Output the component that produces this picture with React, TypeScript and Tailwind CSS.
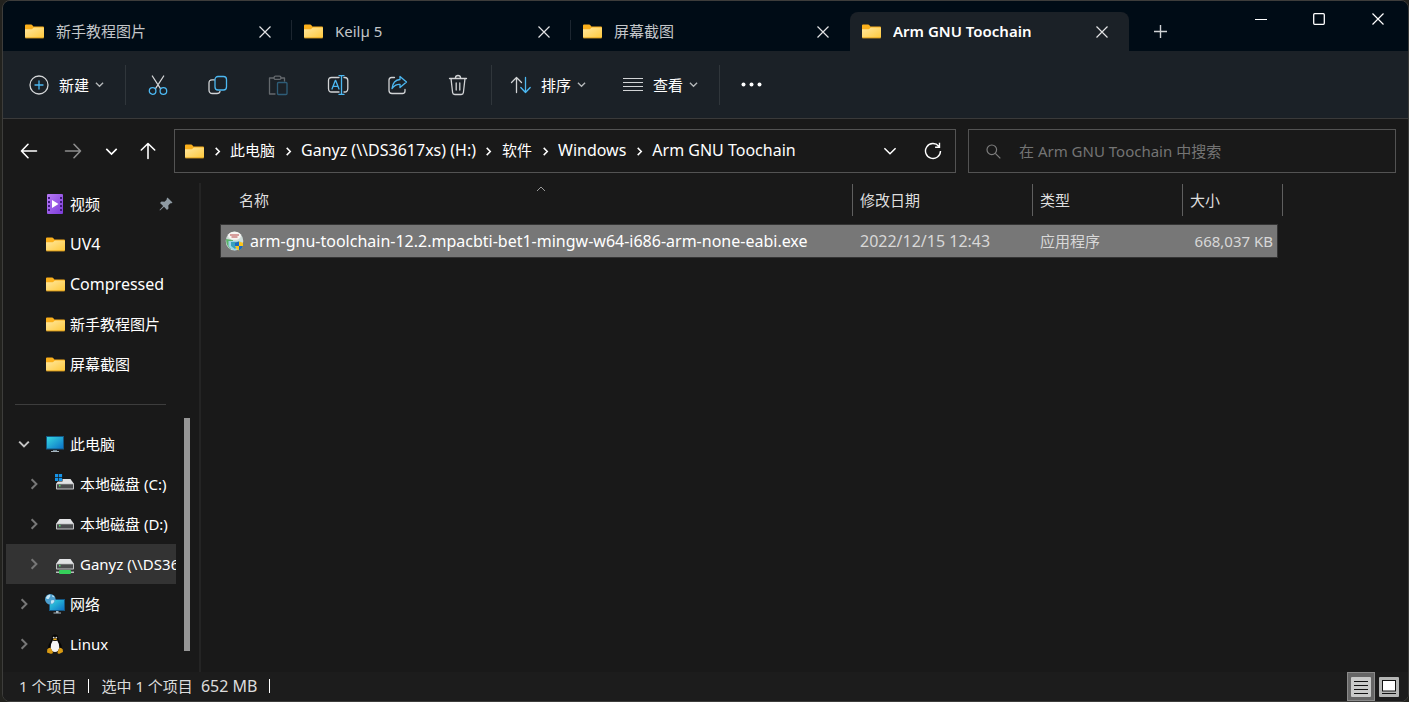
import type { ReactNode } from "react";

const FONT =
  'font-["Noto_Sans","Noto_Sans_CJK_SC",sans-serif]';

function FolderIcon() {
  return (
    <svg width="19" height="15" viewBox="0 0 19 15" className="shrink-0" aria-hidden="true">
      <defs>
        <linearGradient id="folderFace" x1="0" y1="0" x2="1" y2="1">
          <stop offset="0" stopColor="#ffe8a0" />
          <stop offset="1" stopColor="#ffc93c" />
        </linearGradient>
      </defs>
      <path d="M0 1.5Q0 .5 1 .5h5.2q.6 0 1 .5l1.2 1.5H18q1 0 1 1V8H0z" fill="#fbb01c" />
      <path d="M0 5.2h6.6q.5 0 .9-.4l1-1.1q.3-.3.8-.3H18q1 0 1 1V13q0 1-1 1H1q-1 0-1-1z" fill="url(#folderFace)" />
      <path d="M.4 13.9h18.2" stroke="#e2a21d" strokeWidth="1" />
    </svg>
  );
}

function Chevron({ dir, size = 8, width = 1, className = "" }: { dir: "down" | "right" | "up"; size?: number; width?: number; className?: string }) {
  const d = { down: "M1 3l4 4 4-4", up: "M1 7l4-4 4 4", right: "M3 1l4 4-4 4" }[dir];
  return (
    <svg width={size} height={size} viewBox="0 0 10 10" fill="none" stroke="currentColor" strokeWidth={(width * 10) / size} className={`shrink-0 ${className}`} aria-hidden="true">
      <path d={d} />
    </svg>
  );
}

function CloseIcon({ size = 12 }: { size?: number }) {
  return (
    <svg width={size} height={size} viewBox="0 0 12 12" stroke="currentColor" strokeWidth="1.2" aria-hidden="true">
      <path d="M.5.5l11 11M11.5.5l-11 11" />
    </svg>
  );
}

function Glyph({ children, className = "" }: { children: ReactNode; className?: string }) {
  return (
    <svg width="22" height="22" viewBox="0 0 22 22" fill="none" stroke="#d2d4d6" strokeWidth="1.3" strokeLinecap="round" strokeLinejoin="round" className={`shrink-0 ${className}`} aria-hidden="true">
      {children}
    </svg>
  );
}

const BLUE = "#4cb8f2";

const NewIcon = () => (
  <Glyph>
    <circle cx="11" cy="11" r="9" />
    <path d="M11 7v8M7 11h8" stroke={BLUE} />
  </Glyph>
);
const CutIcon = () => (
  <Glyph>
    <path d="M5.3 2l8.2 12.6M16.7 2L8.5 14.6" />
    <circle cx="5.6" cy="17" r="3.3" stroke={BLUE} />
    <circle cx="16.4" cy="17" r="3.3" stroke={BLUE} />
  </Glyph>
);
const CopyIcon = () => (
  <Glyph>
    <path d="M7.4 5.900H5Q2 5.900 2 8.900V16q0 3.500 3.500 3.500H10q2.500 0 3-2.200" />
    <rect x="8" y="2.500" width="11.500" height="13.500" rx="3" stroke={BLUE} />
  </Glyph>
);
const PasteIcon = () => (
  <Glyph className="opacity-40">
    <path d="M7 4H2.500v16H8M14 4h3.500v3" />
    <rect x="7" y="2.200" width="7" height="3.200" rx="1.500" />
    <rect x="10.500" y="8.500" width="9.500" height="12" rx="1" stroke={BLUE} />
  </Glyph>
);
const RenameIcon = () => (
  <Glyph>
    <path d="M12 3.500H4.500Q1.500 3.500 1.500 6.500v8q0 3.500 3 3.500H12M17 3.500h.8q3 0 3 3v8q0 3.500-3 3.500H17" />
    <path d="M5 15l3.300-8.500h.4L12 15M6.200 12.400h4.600" stroke={BLUE} />
    <path d="M14.500 2v18M12 1.600h5M12 20.400h5" stroke={BLUE} />
  </Glyph>
);
const ShareIcon = () => (
  <Glyph>
    <path d="M7.500 3.500H4.500Q2 3.500 2 6v10.500Q2 19.500 5 19.500h10.500q2.500 0 2.500-2.500v-1.500" />
    <path d="M13 2.500l6.500 5.500-6.500 5.500V10.500Q8.500 10 5 14.500 6 6 13 5.500z" stroke={BLUE} />
  </Glyph>
);
const TrashIcon = () => (
  <Glyph>
    <path d="M2.500 4.500h17M8.300 4.200q.3-2.700 2.700-2.700t2.700 2.700M4 4.500l1.600 14q.2 2 2.200 2h6.400q2 0 2.200-2l1.600-14M9.200 9v7M12.800 9v7" />
  </Glyph>
);
const SortIcon = () => (
  <Glyph>
    <path d="M6.500 18.500V3.500M1.500 8.500l5-5 5 5" />
    <path d="M15.500 3.500v15M10.800 13.500l4.700 5 4.700-5" stroke={BLUE} />
  </Glyph>
);
const ViewIcon = () => (
  <Glyph>
    <path d="M1 4.500h20M1 8.500h20M1 12.500h20M1 16.500h20" strokeLinecap="butt" strokeWidth="1" />
  </Glyph>
);

function Arrow({ rotate = "" }: { rotate?: string }) {
  return (
    <svg width="18" height="18" viewBox="0 0 18 18" fill="none" stroke="currentColor" strokeWidth="1.600" strokeLinecap="round" strokeLinejoin="round" className={rotate} aria-hidden="true">
      <path d="M16.500 9h-15M8 2.300L1.500 9 8 15.700" />
    </svg>
  );
}

function VideoIcon() {
  return (
    <svg width="18" height="20" viewBox="0 0 18 20" aria-hidden="true">
      <defs>
        <linearGradient id="film" x1="0" y1="0" x2="1" y2="1">
          <stop offset="0" stopColor="#b77af5" />
          <stop offset="1" stopColor="#7c3bd9" />
        </linearGradient>
      </defs>
      <rect x="1" width="16" height="20" rx="1" fill="url(#film)" />
      <path d="M3 3v15M15 3v15" stroke="#40197d" strokeWidth="2" strokeDasharray="2 2" />
      <path d="M6 6l6.500 4L6 14z" fill="#fff" />
    </svg>
  );
}

function MonitorIcon() {
  return (
    <svg width="18" height="16" viewBox="0 0 18 16" aria-hidden="true">
      <defs>
        <linearGradient id="screen" x1="0" y1="0" x2="1" y2="1">
          <stop offset="0" stopColor="#38dbe0" />
          <stop offset="1" stopColor="#0a6fc6" />
        </linearGradient>
      </defs>
      <rect x=".5" y=".5" width="17" height="12.500" fill="url(#screen)" stroke="#145783" />
      <path d="M7 14h4v1H7z" fill="#6f8695" />
      <path d="M5 15h8v1H5z" fill="#a9b7c0" />
    </svg>
  );
}

function DriveIcon({ kind = "plain" }: { kind?: "plain" | "system" | "network" }) {
  return (
    <svg width="20" height="20" viewBox="0 0 20 20" aria-hidden="true">
      <path d="M4.500 5h11L19 10H1z" fill="#e2e3e5" />
      <rect x="1" y="9.500" width="18" height="6" rx=".8" fill="#c4c5c7" />
      <rect x="2" y="10.300" width="16" height="4.200" fill="#4b4c4e" />
      <rect x="4" y="11" width="1.500" height="1.500" fill="#4ee06a" />
      {kind === "system" && (
        <g fill="#1593e8">
          <rect x="0" y="0" width="7.500" height="7.500" fill="#191919" />
          <path d="M0 0h3.200v3.200H0zM3.900 0h3.200v3.200H3.900zM0 3.900h3.200v3.200H0zM3.900 3.900h3.200v3.200H3.900z" />
        </g>
      )}
      {kind === "network" && (
        <g>
          <path d="M1 17.500h18v1.500H1z" fill="#b9bcbe" />
          <rect x="4" y="16" width="12" height="4" rx="1" fill="#35d05a" />
        </g>
      )}
    </svg>
  );
}

function NetworkIcon() {
  return (
    <svg width="20" height="20" viewBox="0 0 20 20" aria-hidden="true">
      <rect x="4.500" y="5.500" width="15" height="11" fill="url(#screen)" stroke="#145783" />
      <path d="M11 17h2.500v1.500H16v1H8.500v-1H11z" fill="#a9b7c0" />
      <circle cx="5.300" cy="5.300" r="5.300" fill="#4c9fce" />
      <path d="M1 3.500Q2.500.8 5 .6 6.200 2 4.500 3.500 4 5.500 2.500 5 1.200 5 1 3.500zM6 6.500q3-1 3.500.5-1 2.500-2.800 3Q5.500 8.500 6 6.500zM7 1q2 .7 2.600 2.300L7.500 3z" fill="#c6e6f5" />
    </svg>
  );
}

function TuxIcon() {
  return (
    <svg width="18" height="20" viewBox="0 0 18 20" aria-hidden="true">
      <path d="M9 .5q3 0 3.200 3.300Q12.300 6 13.800 8q2 2.800 2 5.500T13 18H5q-2.800-1.800-2.800-4.500T4.200 8q1.500-2 1.600-4.200Q6 .5 9 .5z" fill="#060606" />
      <path d="M6.800 6.500q2.200 1.200 4.400 0Q13.500 10 13.300 13.500 12.500 18 9 18T4.700 13.500Q4.500 10 6.800 6.500z" fill="#f4f4f4" />
      <circle cx="7.700" cy="3.600" r=".9" fill="#ddd" />
      <circle cx="10.300" cy="3.600" r=".9" fill="#ddd" />
      <path d="M6.800 5.200L9 4.200l2.200 1Q9 7.200 6.800 5.200z" fill="#e8a91c" />
      <path d="M1.300 15.200q2.200-1.700 3.400-1.300l2.300 4Q6.800 20 4.500 19.700L1 18.600zM16.700 15.200q-2.200-1.700-3.400-1.300l-1.800 4q-.2 2.100 2 1.800l3.500-1.600z" fill="#d99a12" />
    </svg>
  );
}

function InstallerIcon() {
  return (
    <svg width="20" height="20" viewBox="0 0 20 20" className="shrink-0" aria-hidden="true">
      <ellipse cx="9.500" cy="10" rx="8.800" ry="9.500" fill="#cfdcd8" />
      <path d="M1 8q0 7 5 10.500L8 9z" fill="#59b36a" />
      <path d="M3.500 10h12v5q-2 4-6 4.300Q5 18.500 3.500 15z" fill="#9cd4e4" />
      <ellipse cx="9.500" cy="4.800" rx="6.500" ry="4" fill="#f7f4f2" />
      <path d="M5 4h9M6.500 6h6" stroke="#b84848" strokeWidth="1.200" />
      <path d="M6 11h7v4l-3 3-4-3z" fill="#38a1bd" />
      <path d="M14 10.500l4 1.300V15q-.8 3-4 4.500-3.200-1.500-4-4.500v-3.200z" fill="#fac41c" />
      <path d="M14 10.500l-4 1.300V15h4zM14 15h4q-.8 3-4 4.500z" fill="#1769c4" />
    </svg>
  );
}

const tabs = [
  { title: "新手教程图片", active: false, line: true },
  { title: "Keilµ 5", active: false, line: true },
  { title: "屏幕截图", active: false, line: false },
  { title: "Arm GNU Toochain", active: true, line: false },
];

function TabStrip() {
  return (
    <header className="flex h-[50px] shrink-0 items-start bg-[#000c16] pl-2.5">
      <div role="tablist" className="flex min-w-0 self-end">
        {tabs.map((t) => (
          <div
            key={t.title}
            className={`relative flex h-[39px] w-[279px] min-w-0 items-center pr-[21px] pl-3 ${t.active ? "rounded-t-lg bg-[#1b2127] font-semibold text-white" : "text-[#c3c6c9]"}`}
          >
            <button role="tab" aria-selected={t.active} className="flex min-w-0 flex-1 items-center gap-3 text-left">
              <FolderIcon />
              <span className="truncate pb-0.5 text-[15px] leading-5">{t.title}</span>
            </button>
            <button aria-label="关闭标签页" className="text-[#e3e4e5]">
              <CloseIcon />
            </button>
            {t.line && <span className="absolute top-2 right-0 h-5 w-px bg-[#1c2630]" />}
          </div>
        ))}
      </div>
      <button aria-label="新建标签页" className="grid h-[39px] w-[62px] shrink-0 place-items-center self-end text-[#d0d3d5]">
        <svg width="13" height="13" viewBox="0 0 13 13" stroke="currentColor" strokeWidth="1.400" aria-hidden="true">
          <path d="M6.500 0v13M0 6.500h13" />
        </svg>
      </button>
      <div className="ml-auto flex shrink-0 text-white">
        <button aria-label="最小化" className="grid h-9 w-[58px] place-items-center">
          <svg width="12" height="12" viewBox="0 0 12 12" stroke="currentColor" aria-hidden="true"><path d="M0 6.500h12" /></svg>
        </button>
        <button aria-label="最大化" className="grid h-9 w-[58px] place-items-center">
          <svg width="12" height="12" viewBox="0 0 12 12" stroke="currentColor" fill="none" strokeWidth="1.300" aria-hidden="true"><rect x=".7" y=".7" width="10.600" height="10.600" rx="1" /></svg>
        </button>
        <button aria-label="关闭" className="grid h-9 w-[60px] place-items-center"><CloseIcon size={12} /></button>
      </div>
    </header>
  );
}

function ToolButton({ label, children }: { label: string; children: ReactNode }) {
  return (
    <button aria-label={label} className="grid h-10 w-[60px] shrink-0 place-items-center">
      {children}
    </button>
  );
}

function MenuButton({ label, icon }: { label: string; icon: ReactNode }) {
  return (
    <button className="flex h-10 shrink-0 items-center text-white">
      {icon}
      <span className="ml-[9px] text-[15px] leading-5 whitespace-nowrap">{label}</span>
      <Chevron dir="down" size={9} width={1.3} className="ml-1.5 text-[#b4b7b9]" />
    </button>
  );
}

const Rule = ({ className = "" }: { className?: string }) => <span className={`h-10 w-px shrink-0 bg-[#30363b] ${className}`} />;

function Toolbar() {
  return (
    <div role="toolbar" className="flex h-[68px] shrink-0 items-center border-b border-[#3a3a3a] bg-[#1b2127] pl-[25px]">
      <MenuButton label="新建" icon={<NewIcon />} />
      <Rule className="mr-0.5 ml-[21px]" />
      <ToolButton label="剪切"><CutIcon /></ToolButton>
      <ToolButton label="复制"><CopyIcon /></ToolButton>
      <ToolButton label="粘贴"><PasteIcon /></ToolButton>
      <ToolButton label="重命名"><RenameIcon /></ToolButton>
      <ToolButton label="共享"><ShareIcon /></ToolButton>
      <ToolButton label="删除"><TrashIcon /></ToolButton>
      <Rule className="mr-[18px] ml-[3px]" />
      <MenuButton label="排序" icon={<SortIcon />} />
      <span className="w-9 shrink-0" />
      <MenuButton label="查看" icon={<ViewIcon />} />
      <Rule className="ml-[21px]" />
      <button aria-label="更多" className="grid h-10 w-[62px] place-items-center">
        <svg width="21" height="5" viewBox="0 0 21 5" fill="#fff" aria-hidden="true">
          <circle cx="2.500" cy="2.500" r="2" /><circle cx="10.500" cy="2.500" r="2" /><circle cx="18.500" cy="2.500" r="2" />
        </svg>
      </button>
    </div>
  );
}

const crumbs = [
  { name: "此电脑", size: "text-[15px]" },
  { name: "Ganyz (\\\\DS3617xs) (H:)", size: "text-base" },
  { name: "软件", size: "text-[15px]" },
  { name: "Windows", size: "text-base" },
  { name: "Arm GNU Toochain", size: "text-base" },
];

function AddressRow() {
  return (
    <div className="flex h-16 shrink-0 items-center pr-3 pl-1 text-white">
      <button aria-label="后退" className="grid h-10 w-11 place-items-center"><Arrow /></button>
      <button aria-label="前进" className="grid h-10 w-11 place-items-center text-[#8d8d8d]"><Arrow rotate="rotate-180" /></button>
      <button aria-label="最近的位置" className="grid h-10 w-8 place-items-center"><Chevron dir="down" size={13} width={1.6} /></button>
      <button aria-label="向上" className="grid h-10 w-[42px] place-items-center"><Arrow rotate="rotate-90" /></button>
      <nav aria-label="地址" className="ml-[5px] flex h-11 min-w-0 flex-1 items-center border border-[#535353] pr-3 pl-2.5">
        <FolderIcon />
        {crumbs.map((c) => (
          <span key={c.name} className="flex items-center whitespace-nowrap">
            <span className="grid w-[26px] place-items-center"><Chevron dir="right" size={9} width={1.5} /></span>
            <a href="#" className={`pb-0.5 leading-5 ${c.size}`}>{c.name}</a>
          </span>
        ))}
        <button aria-label="以前的位置" className="ml-auto grid h-10 w-10 place-items-center"><Chevron dir="down" size={14} width={1.5} /></button>
        <button aria-label="刷新" className="ml-[13px] grid h-10 w-5 place-items-center">
          <svg width="18" height="18" viewBox="0 0 18 18" fill="none" stroke="currentColor" strokeWidth="1.400" aria-hidden="true">
            <path d="M14.800 4.200A7.500 7.500 0 1 0 16.500 9M15.500.8v4.400h-4.400" />
          </svg>
        </button>
      </nav>
      <label className="ml-3 flex h-11 w-[428px] shrink-0 items-center border border-[#535353] pl-[17px]">
        <svg width="15" height="15" viewBox="0 0 15 15" fill="none" stroke="#7d7d7d" strokeWidth="1.200" aria-hidden="true">
          <circle cx="5.800" cy="5.800" r="4.800" /><path d="M9.300 9.300l5 5" />
        </svg>
        <input aria-label="搜索" placeholder="在 Arm GNU Toochain 中搜索" className="ml-[18px] min-w-0 flex-1 bg-transparent text-[15px] leading-5 outline-none placeholder:text-[#747474]" />
      </label>
    </div>
  );
}

type Node = { name: string; icon: ReactNode; arrow?: "right" | "down"; deep?: boolean; selected?: boolean; pinned?: boolean; latin?: boolean };

const quick: Node[] = [
  { name: "视频", icon: <VideoIcon />, pinned: true },
  { name: "UV4", icon: <FolderIcon />, latin: true },
  { name: "Compressed", icon: <FolderIcon />, latin: true },
  { name: "新手教程图片", icon: <FolderIcon /> },
  { name: "屏幕截图", icon: <FolderIcon /> },
];

const tree: Node[] = [
  { name: "此电脑", icon: <MonitorIcon />, arrow: "down" },
  { name: "本地磁盘 (C:)", icon: <DriveIcon kind="system" />, arrow: "right", deep: true },
  { name: "本地磁盘 (D:)", icon: <DriveIcon />, arrow: "right", deep: true },
  { name: "Ganyz (\\\\DS3617xs) (H:)", icon: <DriveIcon kind="network" />, arrow: "right", deep: true, selected: true },
  { name: "网络", icon: <NetworkIcon />, arrow: "right" },
  { name: "Linux", icon: <TuxIcon />, arrow: "right" },
];

function TreeRow({ node }: { node: Node }) {
  return (
    <li>
      <button className={`flex h-10 w-full items-center overflow-hidden text-left ${node.deep ? "pl-[17px]" : "pl-[7px]"} ${node.selected ? "bg-[#333333]" : ""}`}>
        <span className="grid w-[22px] shrink-0 place-items-center">
          {node.arrow && <Chevron dir={node.arrow} size={12} width={2} className={node.arrow === "down" ? "text-[#c4c4c4]" : "text-[#777777]"} />}
        </span>
        <span className="ml-2.5 grid w-5 shrink-0 place-items-center">{node.icon}</span>
        <span className={`ml-[5px] leading-5 whitespace-nowrap text-white ${node.latin ? "text-base" : "text-[15px]"}`}>{node.name}</span>
        {node.pinned && (
          <svg width="14" height="14" viewBox="0 0 14 14" className="mr-[3px] ml-auto shrink-0" fill="#8e9aa3" aria-hidden="true">
            <path d="M8.500.5l5 5-1.500 1-.7-.2-2 2.200.2 3L8 13 5 9.800 1 13.500l-.5-.5L4.200 9 1 6l1.500-1.500 3 .2 2.200-2L7.500 2z" />
          </svg>
        )}
      </button>
    </li>
  );
}

function Sidebar() {
  return (
    <aside className="flex w-[198px] shrink-0 border-r-2 border-[#242424] pt-px pl-[3px]">
      <div className="w-[170px] shrink-0 overflow-hidden">
        <ul>{quick.map((n) => <TreeRow key={n.name} node={n} />)}</ul>
        <div className="flex h-10 items-center pr-2.5 pl-[9px]">
          <hr className="h-px flex-1 border-0 bg-[#3d3d3d]" />
        </div>
        <ul>{tree.map((n) => <TreeRow key={n.name} node={n} />)}</ul>
      </div>
      <div className="ml-2 flex w-1.5 flex-col justify-end pb-[21px]">
        <span className="h-1/2 bg-[#969696]" />
      </div>
    </aside>
  );
}

function FileTable() {
  const head = "h-8 border-r border-[#5f5f5f] pl-[7px] text-left text-[15px] leading-5 font-normal text-[#dedede]";
  const cell = "flex h-[34px] items-center border-y border-[#343434] bg-[#777777] leading-5 whitespace-nowrap";
  return (
    <main className="min-w-0 flex-1 overflow-hidden pt-px pl-[19px]">
      <table className="w-[1063px] table-fixed border-separate border-spacing-0">
        <colgroup>
          <col className="w-[633px]" />
          <col className="w-[180px]" />
          <col className="w-[150px]" />
          <col className="w-[100px]" />
        </colgroup>
        <thead>
          <tr>
            <th className={`${head} relative`}>
              <span className="pl-3">名称</span>
              <Chevron dir="up" size={10} className="absolute top-0 left-1/2 text-[#9a9a9a]" />
            </th>
            <th className={head}>修改日期</th>
            <th className={head}>类型</th>
            <th className={head}>大小</th>
          </tr>
        </thead>
        <tbody>
          <tr>
            <td className="p-0 pt-2">
              <div className={`${cell} gap-[5px] border-l pl-1 text-base text-white`}>
                <InstallerIcon />
                arm-gnu-toolchain-12.2.mpacbti-bet1-mingw-w64-i686-arm-none-eabi.exe
              </div>
            </td>
            <td className="p-0 pt-2"><div className={`${cell} pl-[7px] text-base text-[#d8d8d8]`}>2022/12/15 12:43</div></td>
            <td className="p-0 pt-2"><div className={`${cell} pl-[7px] text-[15px] text-[#d8d8d8]`}>应用程序</div></td>
            <td className="p-0 pt-2"><div className={`${cell} mr-[5px] justify-end border-r pr-1 text-[15px] text-[#d8d8d8]`}>668,037 KB</div></td>
          </tr>
        </tbody>
      </table>
    </main>
  );
}

function StatusBar() {
  return (
    <footer className="flex h-[29px] shrink-0 items-center bg-[#1c1c1c] pr-[9px] pl-4 text-[15px] text-[#dcdcdc]">
      <div className="flex items-center pb-0.5 leading-5">
        <span>1 个项目</span>
        <span className="mx-3 h-3.5 w-px bg-white" />
        <span>选中 1 个项目</span>
        <span className="ml-2 text-base leading-5">652 MB</span>
        <span className="ml-3 h-3.5 w-px bg-white" />
      </div>
      <div className="ml-auto flex items-center gap-1">
        <button aria-label="详细信息" className="grid h-[29px] w-7 place-items-center border border-[#8a8a8a] bg-[#666666]">
          <svg width="20" height="20" viewBox="0 0 20 20" aria-hidden="true">
            <rect width="20" height="20" rx="1" fill="#c9cac9" />
            <path d="M3 4.500h14M3 8.500h14M3 12.500h14M3 16.500h14" stroke="#111" />
          </svg>
        </button>
        <button aria-label="大图标" className="grid h-5 w-5 place-items-center">
          <svg width="20" height="20" viewBox="0 0 20 20" aria-hidden="true">
            <rect width="20" height="20" rx="1" fill="#b5b6b5" />
            <rect x="3.500" y="3.500" width="13" height="10.500" fill="#fff" stroke="#111" />
            <path d="M3 16.500h14" stroke="#111" />
          </svg>
        </button>
      </div>
    </footer>
  );
}

export default function App() {
  return (
    <div className={`flex h-screen bg-[#22221e] pl-0.5 ${FONT}`}>
      <div className="flex min-w-0 flex-1 flex-col overflow-hidden rounded-lg border border-[#3d3d3b] bg-[#191919]">
        <TabStrip />
        <Toolbar />
        <AddressRow />
        <div className="flex min-h-0 flex-1">
          <Sidebar />
          <FileTable />
        </div>
        <StatusBar />
      </div>
    </div>
  );
}
